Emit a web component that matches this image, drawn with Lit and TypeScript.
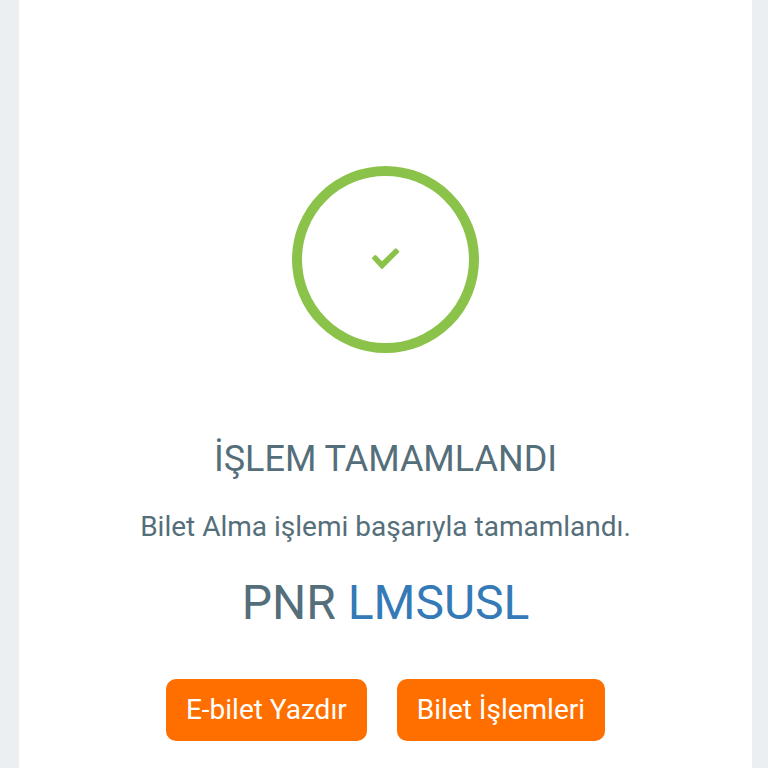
import { LitElement, html, css } from "lit";
import { customElement } from "lit/decorators.js";

@customElement("app-root")
export class AppRoot extends LitElement {
  static styles = css`
    :host {
      display: block;
      box-sizing: border-box;
      min-height: 100vh;
      padding: 0 16px 0 19px;
      background: #eceff1;
      color: #546e7a;
      font-family: Roboto, "Liberation Sans", sans-serif;
    }
    .panel {
      box-sizing: border-box;
      min-height: 100vh;
      display: flex;
      flex-direction: column;
      align-items: center;
      padding: 166px 16px 27px;
      background: #fff;
      text-align: center;
    }
    .ring {
      box-sizing: border-box;
      width: 187px;
      height: 187px;
      display: grid;
      place-items: center;
      border: 10px solid #8bc34a;
      border-radius: 50%;
    }
    .check {
      display: block;
      width: 29px;
      height: 25px;
    }
    h1,
    p {
      margin: 0;
      font-weight: 400;
    }
    h1 {
      margin-top: 86px;
      font-size: 36px;
      line-height: 40px;
    }
    .message {
      margin-top: 32px;
      font-size: 28px;
      line-height: 32px;
    }
    .pnr {
      margin-top: 32px;
      font-size: 48px;
      line-height: 56px;
    }
    .pnr a {
      color: #337ab7;
      text-decoration: none;
    }
    .actions {
      display: flex;
      flex-wrap: wrap;
      justify-content: center;
      gap: 30px;
      margin-top: 48px;
    }
    button {
      height: 62px;
      padding: 0 20px;
      border: 0;
      border-radius: 10px;
      background: #ff6f00;
      color: #fff;
      font: 400 28px/32px Roboto, "Liberation Sans", sans-serif;
      cursor: pointer;
    }
  `;

  render() {
    return html`
      <main class="panel">
        <div class="ring">
          <svg class="check" viewBox="0 0 29 25" aria-hidden="true">
            <path
              d="M2 11.300 L4.400 9 L10.900 15.700 L24.800 2.200 L27.200 4.700 L11 21.100 Z"
              fill="#8bc34a"
              stroke="#8bc34a"
              stroke-width="2"
              stroke-linejoin="round"
            />
          </svg>
        </div>
        <h1>İŞLEM TAMAMLANDI</h1>
        <p class="message">Bilet Alma işlemi başarıyla tamamlandı.</p>
        <p class="pnr">PNR <a href="#pnr">LMSUSL</a></p>
        <div class="actions">
          <button type="button">E-bilet Yazdır</button>
          <button type="button">Bilet İşlemleri</button>
        </div>
      </main>
    `;
  }
}
